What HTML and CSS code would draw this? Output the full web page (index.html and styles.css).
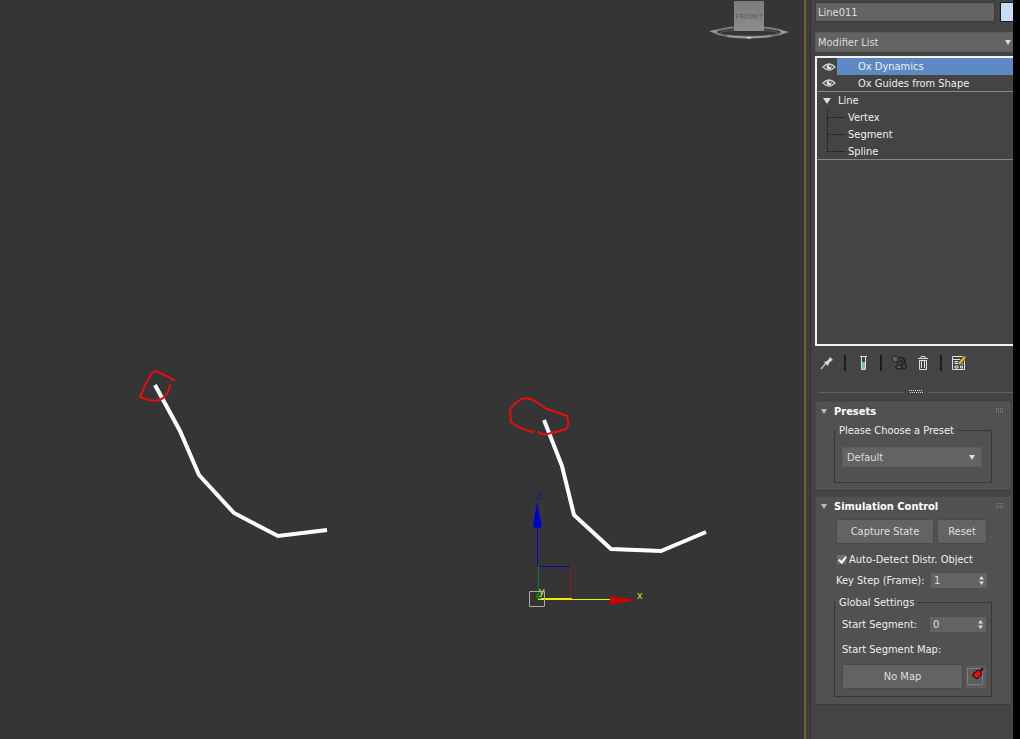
FILE: index.html
```html
<!DOCTYPE html>
<html lang="en">
<head>
<meta charset="utf-8">
<title>Modifier panel</title>
<link rel="stylesheet" href="styles.css">
</head>
<body>
<div class="app">
  <main class="viewport">
    <svg class="scene" width="804" height="739" viewBox="0 0 804 739" role="img" aria-label="Front viewport">
      <defs>
        <linearGradient id="cube" x1="0" y1="0" x2="0" y2="1"><stop offset="0" stop-color="#7c7c7c"/><stop offset="1" stop-color="#8c8c8c"/></linearGradient>
      </defs>
      <ellipse cx="749" cy="32" rx="33" ry="5" fill="none" stroke="#7c7c7c" stroke-width="2"/>
      <ellipse cx="749" cy="33" rx="29" ry="3" fill="none" stroke="#555" stroke-width="1"/>
      <path d="M709 31l11-2-5 3 6 4zM789 32l-11-3 4 4-5 3z" fill="#999"/>
      <path d="M727 36q22 3 44 0" fill="none" stroke="#999" stroke-width="2"/>
      <path d="M745 37h8l-4 2z" fill="#ccc"/>
      <path d="M734 1h30v30h-30z" fill="url(#cube)"/>
      <text class="cube-label" x="749" y="19" text-anchor="middle">FRONT</text>
      <g fill="none" stroke="#fff" stroke-width="4">
        <path d="M155 385L180 431 199 475 234 513 278 536 327 530"/>
        <path d="M544 420L562 466 574 515 611 549 661 551 706 532"/>
      </g>
      <g fill="none" stroke="#ea0c0c" stroke-width="2" stroke-linecap="round" stroke-linejoin="round">
        <path d="M174 380L158 372Q154 370 151 374Q145 384 140 397L149 400Q158 402 163 398Q169 393 170 385"/>
        <path d="M172 380h2"/>
        <path d="M533 432Q522 430 511 422L510 411Q511 406 521 399Q527 397 533 400L547 409 567 416Q570 424 566 429Q558 432 551 433Q543 436 538 432"/>
      </g>
      <path d="M538.500 566.500H570" stroke="#0a0a9c" fill="none"/>
      <path d="M570.500 567v32" stroke="#a01414" fill="none"/>
      <path d="M537.500 525v41" stroke="#0808b8" fill="none"/>
      <path d="M538.500 566v33" stroke="#087848" fill="none"/>
      <path d="M537 502l5 25q-5 2-9 0z" fill="#0000cc"/>
      <path d="M538 599.500h72M538 598.500h34" stroke="#ee0" fill="none"/>
      <path d="M610 596l26 4-26 5z" fill="#c80000"/>
      <path d="M529.500 591.500h15v15h-15z" stroke="#aaa" fill="none"/>
      <path d="M536 594h5v5h-5z" fill="#087808"/>
      <text class="axis axis-z" x="536" y="499">z</text>
      <text class="axis" x="539" y="595">y</text>
      <text class="axis" x="637" y="599">x</text>
    </svg>
  </main>

  <aside class="panel">
    <div class="name-row">
      <input class="name-field" type="text" value="Line011" aria-label="Object name">
      <button class="swatch" type="button" aria-label="Object colour"></button>
    </div>

    <div class="drop modifier-drop">
      <select aria-label="Modifier List"><option>Modifier List</option></select>
      <svg class="drop-arrow" width="6" height="5"><path d="M0 0h6L3 5z"/></svg>
    </div>

    <div class="stack">
      <div class="mod selected">
        <button class="eye" type="button" aria-label="Toggle Ox Dynamics"><svg width="14" height="10" viewBox="0 0 14 10"><path d="M1 5Q7-1 13 5Q7 11 1 5z" fill="none" stroke="#d0d0d0" stroke-width="1.200"/><circle cx="7" cy="5" r="2.500" fill="#d8d8d8"/><circle cx="8" cy="4" r="1" fill="#444"/></svg></button>
        <span class="mod-name">Ox Dynamics</span>
      </div>
      <div class="mod ruled">
        <button class="eye" type="button" aria-label="Toggle Ox Guides from Shape"><svg width="14" height="10" viewBox="0 0 14 10"><path d="M1 5Q7-1 13 5Q7 11 1 5z" fill="none" stroke="#d0d0d0" stroke-width="1.200"/><circle cx="7" cy="5" r="2.500" fill="#d8d8d8"/><circle cx="8" cy="4" r="1" fill="#444"/></svg></button>
        <span class="mod-name">Ox Guides from Shape</span>
      </div>
      <div class="base"><svg width="8" height="6"><path d="M0 0h8L4 6z" fill="#ddd"/></svg><span>Line</span></div>
      <div class="subs">
        <svg class="branches" width="20" height="51" viewBox="0 0 20 51"><path d="M.5 0v43M1 8.500h17M1 25.500h17M1 42.500h17" fill="none" stroke="#111" stroke-dasharray="1 1"/></svg>
        <ul class="sub-list"><li>Vertex</li><li>Segment</li><li>Spline</li></ul>
      </div>
    </div>

    <div class="tools">
      <button class="tool" type="button" aria-label="Pin stack"><svg width="16" height="16" viewBox="0 0 16 16"><path d="M2 14l5-6" stroke="#bbb" stroke-width="1.500"/><path d="M5 7l4 4 1-3 2-2 2-1-3-3-1 2-2 2z" fill="#ddd"/></svg></button>
      <i class="bar"></i>
      <button class="tool" type="button" aria-label="Show end result"><svg width="16" height="16" viewBox="0 0 16 16"><path d="M5 1.500h7M6.500 2v12.500h4V2" fill="none" stroke="#ddd"/><path d="M7 7h3v7H7z" fill="#6cc4a4"/></svg></button>
      <i class="bar"></i>
      <button class="tool" type="button" aria-label="Make unique"><svg width="16" height="16" viewBox="0 0 16 16"><circle cx="4" cy="4" r="3" fill="#606060" stroke="#292929"/><path d="M8 3q5-1 6 3v3M6 8q3-3 6-1" fill="none" stroke="#262626" stroke-width="2"/><ellipse cx="8" cy="12" rx="3" ry="2" fill="#555" stroke="#252525" stroke-width="1.500"/><ellipse cx="13" cy="11" rx="2" ry="3" fill="#444" stroke="#252525" stroke-width="1.500"/></svg></button>
      <button class="tool" type="button" aria-label="Remove modifier"><svg width="16" height="16" viewBox="0 0 16 16"><path d="M3 3.500h10M6 3V1.500h4V3M4.500 5v9.500h7V5M6.500 5v8M9.500 5v8M4 5.500h8" fill="none" stroke="#ddd"/></svg></button>
      <i class="bar"></i>
      <button class="tool" type="button" aria-label="Configure modifier sets"><svg width="16" height="16" viewBox="0 0 16 16"><path d="M1.500 1.500h12v13h-12zM1 4.500h12M4 6.500h3v2H4zM9.500 7.500h2v1.500h-2zM4 11h3v2H4zM9.500 11h2v2h-2z" fill="none" stroke="#ddd"/><path d="M8 9l6-7" stroke="#333" stroke-width="4"/><path d="M8 9l6-7" stroke="#e8b818" stroke-width="2.500"/></svg></button>
    </div>

    <div class="splitter"><i></i><svg width="14" height="4"><path d="M0 .5h14M1 2.500h13" stroke="#ddd" stroke-dasharray="1 1"/></svg><i></i></div>

    <section class="rollout">
      <h2><svg width="6" height="5"><path d="M0 0h6L3 5z" fill="#bbb"/></svg><span>Presets</span><svg class="grip" width="7" height="7"><path d="M0 .5h7M0 2.500h7M0 4.500h7" stroke="#888" stroke-dasharray="1 1"/></svg></h2>
      <fieldset class="group preset-group">
        <legend>Please Choose a Preset</legend>
        <div class="drop preset-drop">
          <select aria-label="Preset"><option>Default</option></select>
          <svg class="drop-arrow" width="6" height="5"><path d="M0 0h6L3 5z"/></svg>
        </div>
      </fieldset>
    </section>

    <section class="rollout">
      <h2><svg width="6" height="5"><path d="M0 0h6L3 5z" fill="#bbb"/></svg><span>Simulation Control</span><svg class="grip" width="7" height="7"><path d="M0 .5h7M0 2.500h7M0 4.500h7" stroke="#888" stroke-dasharray="1 1"/></svg></h2>
      <div class="buttons"><button class="btn capture" type="button">Capture State</button><button class="btn reset" type="button">Reset</button></div>
      <label class="check"><input type="checkbox" checked>Auto-Detect Distr. Object</label>
      <div class="field">
        <label for="step">Key Step (Frame):</label>
        <span class="spin"><input id="step" type="number" value="1"><svg width="5" height="9"><path d="M0 3.500L2.500 0 5 3.500zM0 5.500L2.500 9 5 5.500z"/></svg></span>
      </div>
      <fieldset class="group settings-group">
        <legend>Global Settings</legend>
        <div class="field segment-field">
          <label for="segment">Start Segment:</label>
          <span class="spin"><input id="segment" type="number" value="0"><svg width="5" height="9"><path d="M0 3.500L2.500 0 5 3.500zM0 5.500L2.500 9 5 5.500z"/></svg></span>
        </div>
        <p class="map-label">Start Segment Map:</p>
        <div class="map-row">
          <button class="btn map" type="button">No Map</button>
          <button class="pin" type="button" aria-label="Map options"><svg width="18" height="20" viewBox="0 0 18 20"><path d="M1.500 1.500h15v16h-15z" fill="none" stroke="#7c7c7c"/><path d="M7 7l5-4 2 1 2-3 1 1-2 3v3l-4 4-4-3z" fill="#e80c0c" stroke="#190000"/></svg></button>
        </div>
      </fieldset>
    </section>
  </aside>
</div>
</body>
</html>
```
FILE: styles.css
```css
* { box-sizing: border-box; }
body {
  margin: 0;
  background: #353535;
  color: #eee;
  font: 11px/17px "DejaVu Sans Condensed", "Noto Sans", sans-serif;
}
button, input, select {
  font: inherit;
  color: #ddd;
  border: 0;
  border-radius: 0;
  margin: 0;
  padding: 0;
  appearance: none;
}
svg { display: block; flex: none; }
.app { display: flex; min-height: 100vh; }
.viewport { flex: 1; min-width: 0; overflow: hidden; background: #353535; }
.cube-label { font: 8px "Liberation Sans", sans-serif; fill: #5c5c5c; }
.axis { font: 11px "Liberation Sans", sans-serif; fill: #e2dc50; }
.axis-z { fill: #1414a0; }

.panel {
  width: 216px;
  padding: 2px 0 0 9px;
  background: #444;
  border-left: 2px solid #786027;
  border-right: 7px solid #000;
  box-shadow: inset 4px 0 #3e3e3e, inset 5px 0 #303030;
  overflow: hidden;
}
.name-row { display: flex; gap: 5px; margin-bottom: 10px; }
.name-field { flex: 1; min-width: 0; height: 20px; padding: 0 2px; background: #636363; border: 1px solid #3b3b3b; }
.swatch { width: 13px; height: 20px; background: #c9dcf7; border: 1px solid #1d1d1d; border-right: 0; }

.drop { display: flex; align-items: center; position: relative; }
.drop select { flex: 1; width: 100%; height: 20px; background: #636363; border: 1px solid #5b5b5b; }
.drop-arrow { position: absolute; right: 7px; fill: #ddd; pointer-events: none; }
.modifier-drop select { padding-left: 2px; }
.modifier-drop .drop-arrow { right: 2px; }

.stack { height: 290px; margin-top: 4px; border: 2px solid #f2f2f2; border-right: 0; background: #444; }
.mod { display: flex; height: 17px; line-height: 18px; }
.ruled { border-bottom: 1px solid #888; }
.eye { display: flex; width: 20px; padding-left: 5px; align-items: center; background: #444; }
.mod-name { flex: 1; padding-left: 21px; }
.selected .mod-name { background: #5d89c3; }
.base { display: flex; align-items: center; gap: 7px; height: 17px; padding-left: 6px; }
.subs { display: flex; height: 51px; padding-left: 10px; border-bottom: 1px solid #888; }
.sub-list { margin: 0; padding: 0 0 0 1px; list-style: none; }

.tools { display: flex; align-items: center; height: 34px; padding-left: 4px; gap: 9px; }
.tool { background: none; }
.tool + .tool { margin-left: -1px; }
.bar { width: 2px; height: 16px; background: #1c1c1c; }
.splitter { display: flex; align-items: center; gap: 5px; height: 20px; margin-left: 4px; padding-top: 4px; }
.splitter i { flex: 1; height: 1px; background: #626262; }

.rollout { margin: 1px 2px 5px 0; padding: 0 18px 7px 19px; background: #515151; border: 1px solid #484848; border-bottom-color: #3a3a3a; border-radius: 2px; }
.rollout h2 { display: flex; align-items: center; gap: 7px; height: 18px; margin: 0 -11px 2px -14px; font-size: 11px; color: #fff; }
.grip { margin-left: auto; }
.group { margin: 0 0 0 -1px; padding: 0 6px 8px 7px; border: 1px solid #383838; min-width: 0; }
.group legend { padding: 0 3px; margin-left: -6px; }
.preset-group { padding: 8px 9px 15px 7px; }
.preset-drop select { padding-left: 4px; }
.buttons { display: flex; gap: 3px; margin: 4px 5px 5px 1px; }
.btn { height: 25px; background: #636363; border: 1px solid #4a4a4a; border-radius: 2px; }
.capture { flex: 1; }
.reset { width: 50px; }
.check { display: flex; align-items: center; gap: 3px; height: 20px; padding-left: 2px; white-space: nowrap; }
.check input { position: relative; width: 9px; height: 9px; background: #707070; }
.check input:checked::after { content: ""; position: absolute; left: 3px; top: 0; width: 3px; height: 6px; border: solid #fff; border-width: 0 2px 2px 0; transform: rotate(40deg); }
.field { display: flex; align-items: center; justify-content: space-between; height: 22px; padding: 0 5px 0 1px; white-space: nowrap; }
.spin { position: relative; display: flex; align-items: center; }
.spin input { width: 56px; height: 15px; padding-left: 3px; background: #636363; appearance: textfield; }
.spin svg { position: absolute; right: 3px; fill: #ddd; pointer-events: none; }
.settings-group { margin-top: 3px; padding: 0 5px 7px 7px; }
.segment-field { height: 26px; padding: 0; }
.map-label { margin: 4px 0 6px; }
.map-row { display: flex; align-items: center; gap: 3px; }
.map { flex: 1; }
.pin { display: flex; align-items: center; width: 20px; height: 22px; background: #5d5d5d; }
```
